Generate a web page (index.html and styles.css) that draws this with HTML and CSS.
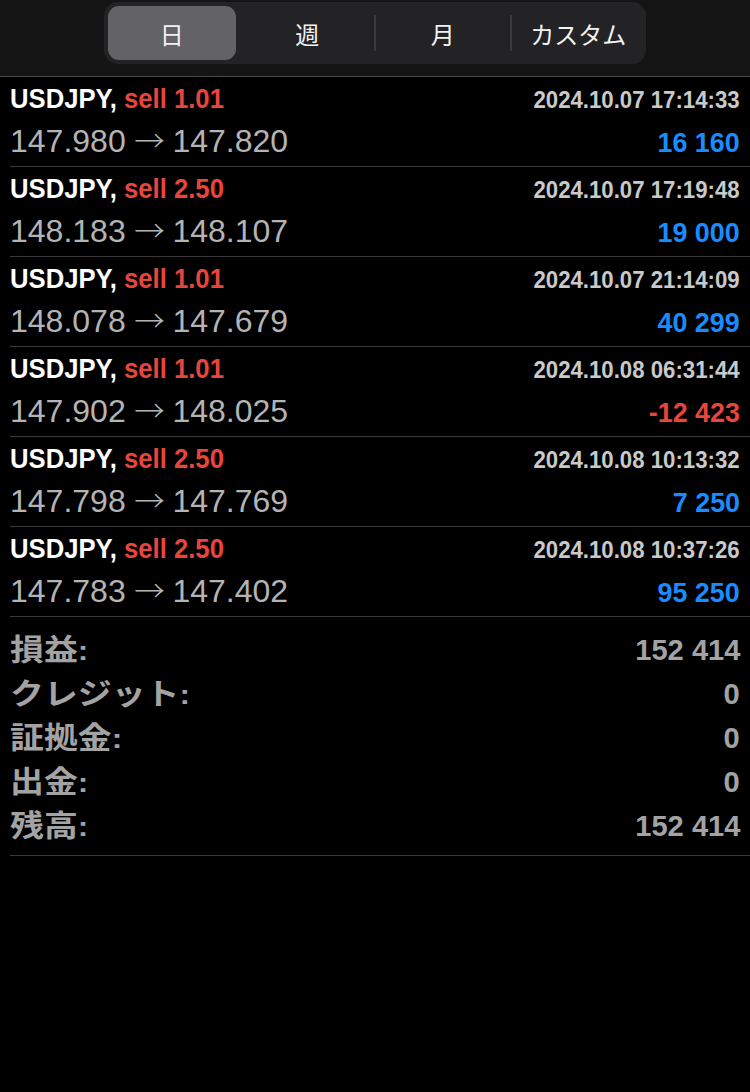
FILE: index.html
```html
<!DOCTYPE html>
<html lang="ja">
<head>
<meta charset="utf-8">
<link rel="stylesheet" href="styles.css">
</head>
<body>
<header class="topbar">
  <div class="seg">
    <div class="seg-item"><span class="pill">日</span></div>
    <div class="seg-item">週</div>
    <div class="seg-item sep">月</div>
    <div class="seg-item sep">カスタム</div>
  </div>
</header>
<main class="list">
  <div class="row">
    <div class="line1"><span class="sym">USDJPY, <span class="sell">sell 1.01</span></span><span class="time">2024.10.07 17:14:33</span></div>
    <div class="line2"><span class="price">147.980 <span class="arrow">→</span> 147.820</span><span class="pl pos">16 160</span></div>
  </div>
  <div class="row">
    <div class="line1"><span class="sym">USDJPY, <span class="sell">sell 2.50</span></span><span class="time">2024.10.07 17:19:48</span></div>
    <div class="line2"><span class="price">148.183 <span class="arrow">→</span> 148.107</span><span class="pl pos">19 000</span></div>
  </div>
  <div class="row">
    <div class="line1"><span class="sym">USDJPY, <span class="sell">sell 1.01</span></span><span class="time">2024.10.07 21:14:09</span></div>
    <div class="line2"><span class="price">148.078 <span class="arrow">→</span> 147.679</span><span class="pl pos">40 299</span></div>
  </div>
  <div class="row">
    <div class="line1"><span class="sym">USDJPY, <span class="sell">sell 1.01</span></span><span class="time">2024.10.08 06:31:44</span></div>
    <div class="line2"><span class="price">147.902 <span class="arrow">→</span> 148.025</span><span class="pl neg">-12 423</span></div>
  </div>
  <div class="row">
    <div class="line1"><span class="sym">USDJPY, <span class="sell">sell 2.50</span></span><span class="time">2024.10.08 10:13:32</span></div>
    <div class="line2"><span class="price">147.798 <span class="arrow">→</span> 147.769</span><span class="pl pos">7 250</span></div>
  </div>
  <div class="row">
    <div class="line1"><span class="sym">USDJPY, <span class="sell">sell 2.50</span></span><span class="time">2024.10.08 10:37:26</span></div>
    <div class="line2"><span class="price">147.783 <span class="arrow">→</span> 147.402</span><span class="pl pos">95 250</span></div>
  </div>
  <div class="summary">
    <div class="srow"><span class="slabel">損益<span class="colon">:</span></span><span class="sval">152 414</span></div>
    <div class="srow"><span class="slabel">クレジット<span class="colon">:</span></span><span class="sval">0</span></div>
    <div class="srow"><span class="slabel">証拠金<span class="colon">:</span></span><span class="sval">0</span></div>
    <div class="srow"><span class="slabel">出金<span class="colon">:</span></span><span class="sval">0</span></div>
    <div class="srow"><span class="slabel">残高<span class="colon">:</span></span><span class="sval">152 414</span></div>
  </div>
</main>
</body>
</html>
```
FILE: styles.css
```css
html, body {
  margin: 0;
  padding: 0;
  background: #000;
  height: 100%;
}
body {
  font-family: "Liberation Sans", "Noto Sans CJK JP", sans-serif;
  color: #fff;
}
.topbar {
  background: #141414;
  height: 77px;
  border-bottom: 1px solid #4a4a4a;
  box-sizing: border-box;
  display: flex;
  justify-content: center;
  padding-top: 2px;
}
.seg {
  width: 542px;
  height: 62px;
  background: #232326;
  border-radius: 14px;
  display: flex;
}
.seg-item {
  flex: 1 1 0;
  position: relative;
  display: flex;
  align-items: center;
  justify-content: center;
  font-family: "Noto Sans CJK JP", sans-serif;
  font-size: 24px;
  color: #f2f2f2;
}
.seg-item.sep::before {
  content: "";
  position: absolute;
  left: -1px;
  top: 13px;
  width: 2px;
  height: 36px;
  background: #3a3a3d;
}
.pill {
  flex: 1;
  align-self: stretch;
  margin: 4px;
  background: #636366;
  border-radius: 11px;
  display: flex;
  align-items: center;
  justify-content: center;
}
.row {
  margin-left: 10px;
  height: 89px;
  border-bottom: 1px solid #3a3a3a;
  display: flex;
  flex-direction: column;
  padding-right: 10px;
}
.line1, .line2 {
  display: flex;
  justify-content: space-between;
  align-items: baseline;
}
.line1 {
  height: 43px;
  line-height: 43px;
}
.line2 {
  height: 46px;
  line-height: 38px;
}
.sym {
  display: inline-block;
  font-weight: bold;
  font-size: 28.5px;
  color: #fff;
  transform: scaleX(0.9);
  transform-origin: left center;
  white-space: pre;
}
.sell {
  color: #e8453c;
}
.time {
  display: inline-block;
  font-weight: bold;
  font-size: 23px;
  color: #c9c9c9;
  transform: scaleX(0.965);
  transform-origin: right center;
}
.price {
  font-size: 32px;
  color: #b4b4b4;
}
.arrow {
  font-family: "Noto Sans CJK JP", sans-serif;
  font-weight: 300;
  font-size: 29px;
  display: inline-block;
  transform: scaleX(1.05);
}
.pl {
  display: inline-block;
  font-weight: bold;
  font-size: 28px;
  transform: scaleX(0.96);
  transform-origin: right center;
}
.pos { color: #1a8cff; }
.neg { color: #e8453c; }
.summary {
  margin-left: 10px;
  padding: 8px 10px 10px 0;
  border-bottom: 1px solid #3a3a3a;
}
.srow {
  display: flex;
  justify-content: space-between;
  align-items: baseline;
  height: 44px;
  line-height: 44px;
  font-weight: bold;
  color: #a3a3a3;
}
.slabel {
  display: inline-block;
  font-family: "Noto Sans CJK JP", sans-serif;
  font-size: 30px;
  transform: scaleX(1.13);
  transform-origin: left center;
}
.colon {
  font-family: "Liberation Sans", sans-serif;
  font-size: 28px;
}
.sval {
  display: inline-block;
  font-size: 30px;
  transform: scaleX(0.97);
  transform-origin: right center;
}
```
